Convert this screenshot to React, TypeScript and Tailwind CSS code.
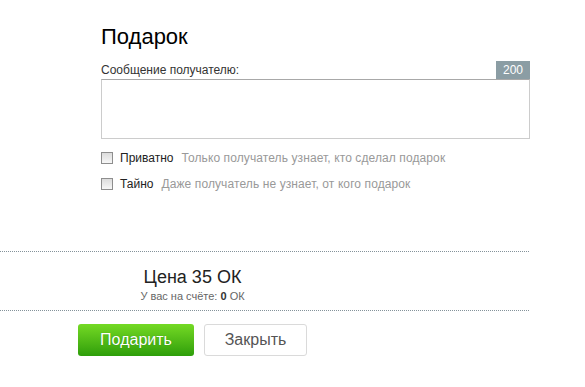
import React from "react";

const font = { fontFamily: '"Liberation Sans", Arial, sans-serif' };

const options = [
  { label: "Приватно", hint: "Только получатель узнает, кто сделал подарок" },
  { label: "Тайно", hint: "Даже получатель не узнает, от кого подарок" },
];

function Checkbox() {
  return (
    <span className="inline-block w-[12px] h-[12px] border border-[#8e8e8e] bg-gradient-to-b from-[#dcdcdc] to-[#f7f7f7] shrink-0" />
  );
}

export default function App() {
  return (
    <div className="w-[585px] h-[387px] bg-white text-[#333] overflow-hidden" style={font}>
      {/* ========== FORM ========== */}
      <div className="pl-[101px] pt-[24px] w-[530px]">
        <h1 className="text-[22px] leading-[26px] text-black font-normal">Подарок</h1>

        <div className="mt-[11px] flex items-center justify-between h-[18px]">
          <span className="text-[12px] leading-[18px] text-[#333]">Сообщение получателю:</span>
          <span className="w-[34px] h-[18px] bg-[#8b9da4] text-white text-[12px] leading-[18px] text-center">
            200
          </span>
        </div>

        <textarea className="block w-[429px] h-[60px] border border-[#cccccc] border-t-[#a8a8a8] resize-none outline-none" />

        <div className="mt-[9px] flex flex-col gap-[6px]">
          {options.map((o) => (
            <label key={o.label} className="flex items-center h-[20px] text-[12px]">
              <Checkbox />
              <span className="ml-[7px] text-[#222]">{o.label}</span>
              <span className="ml-[8px] text-[#999] tracking-[0.1px]">{o.hint}</span>
            </label>
          ))}
        </div>
      </div>

      {/* ========== PRICE ========== */}
      <div className="mt-[57px] w-[529px] border-t border-dotted border-[#84929a]" />

      <div className="ml-[78px] w-[229px] pt-[14px] text-center">
        <div className="text-[18px] leading-[22px] text-[#222]">Цена 35 ОК</div>
        <div className="mt-[1px] text-[11px] leading-[14px] text-[#666]">
          У вас на счёте: <b className="text-[#333]">0</b> ОК
        </div>
      </div>

      <div className="mt-[7px] w-[529px] border-t border-dotted border-[#84929a]" />

      {/* ========== BUTTONS ========== */}
      <div className="mt-[13px] ml-[78px] flex gap-[10px]">
        <button className="w-[116px] h-[32px] rounded-[3px] bg-gradient-to-b from-[#74da24] to-[#2d9e0a] text-white text-[16px] [text-shadow:0_0_1px_rgba(0,80,0,0.4)]">
          Подарить
        </button>
        <button className="w-[103px] h-[32px] rounded-[3px] border border-[#dadada] bg-white text-[#555] text-[16px]">
          Закрыть
        </button>
      </div>
    </div>
  );
}
